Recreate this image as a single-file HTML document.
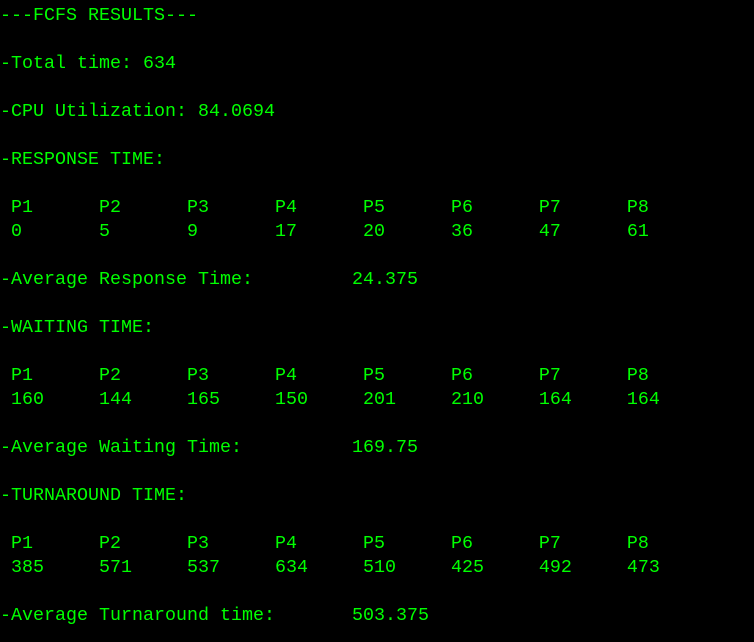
<!DOCTYPE html>
<html><head><meta charset="utf-8"><style>
html,body{margin:0;padding:0;background:#000;width:754px;height:642px;overflow:hidden}
pre{margin:0;padding:4px 0 0 0;font-family:"Liberation Mono",monospace;font-size:18.33px;line-height:24px;color:#0f0;tab-size:8;-moz-tab-size:8;white-space:pre}
</style></head><body><pre>---FCFS RESULTS---

-Total time: 634

-CPU Utilization: 84.0694

-RESPONSE TIME:

 P1	 P2	 P3	 P4	 P5	 P6	 P7	 P8
 0	 5	 9	 17	 20	 36	 47	 61

-Average Response Time:		24.375

-WAITING TIME:

 P1	 P2	 P3	 P4	 P5	 P6	 P7	 P8
 160	 144	 165	 150	 201	 210	 164	 164

-Average Waiting Time:		169.75

-TURNAROUND TIME:

 P1	 P2	 P3	 P4	 P5	 P6	 P7	 P8
 385	 571	 537	 634	 510	 425	 492	 473

-Average Turnaround time:	503.375
</pre></body></html>
